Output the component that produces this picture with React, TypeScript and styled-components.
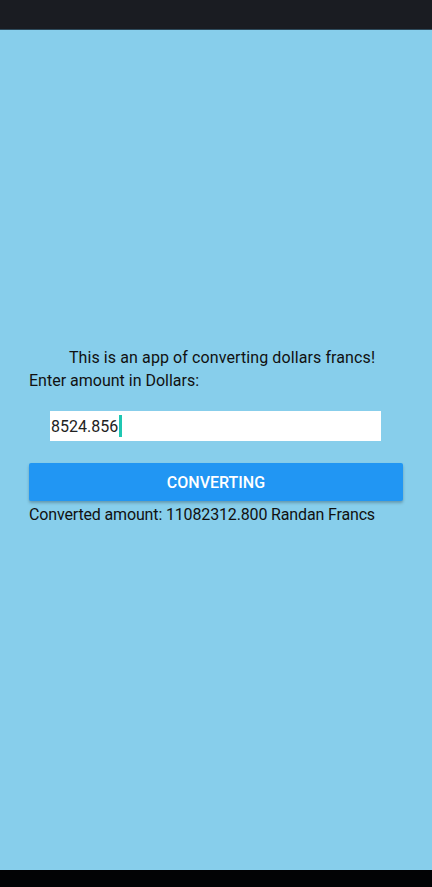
import React from "react";
import styled, { createGlobalStyle } from "styled-components";

const Global = createGlobalStyle`
  html, body { margin: 0; padding: 0; }
  body { font-family: Roboto, "Noto Sans", sans-serif; }
  #root { height: 887px; }
`;

const Screen = styled.div`
  height: 887px;
  display: flex;
  flex-direction: column;
  background: #87ceeb;
`;

const StatusBar = styled.div`
  height: 30px;
  background: #1a1c22;
  border-bottom: 1px solid #2d4a5c;
  box-sizing: border-box;
`;

const Content = styled.div`
  flex: 1;
  display: flex;
  flex-direction: column;
  padding: 317px 29px 0 29px;
  color: #111;
  font-size: 16px;
  line-height: 21px;
`;

const Title = styled.div`
  text-align: center;
  padding-left: 12px;
  letter-spacing: 0.1px;
`;

const Label = styled.div`
  margin-top: 2px;
`;

const InputBox = styled.div`
  margin: 20px 22px 0 21px;
  height: 30px;
  background: #fff;
  display: flex;
  align-items: center;
  padding-left: 1px;
  font-size: 16px;
  color: #222;
`;

const Caret = styled.span`
  display: inline-block;
  width: 2.5px;
  height: 22px;
  background: #1fc7b2;
  margin-left: 1px;
`;

const Button = styled.div`
  margin-top: 22px;
  height: 38px;
  background: #2196f3;
  border-radius: 2px;
  box-shadow: 0 2px 3px rgba(0, 0, 0, 0.25);
  color: #fff;
  font-weight: 500;
  font-size: 16px;
  display: flex;
  align-items: center;
  justify-content: center;
`;

const Result = styled.div`
  margin-top: 3px;
  letter-spacing: -0.15px;
`;

const NavBar = styled.div`
  height: 17px;
  background: #020305;
`;

export default function App() {
  return (
    <>
      <Global />
      <Screen>
        <StatusBar />
        <Content>
          <Title>This is an app of converting dollars francs!</Title>
          <Label>Enter amount in Dollars:</Label>
          <InputBox>
            8524.856
            <Caret />
          </InputBox>
          <Button>CONVERTING</Button>
          <Result>Converted amount: 11082312.800 Randan Francs</Result>
        </Content>
        <NavBar />
      </Screen>
    </>
  );
}
